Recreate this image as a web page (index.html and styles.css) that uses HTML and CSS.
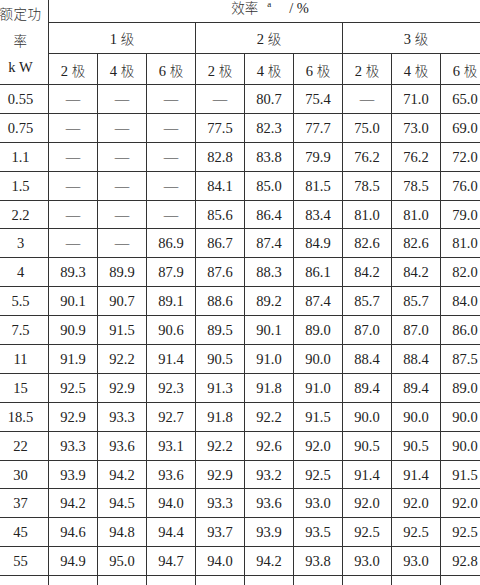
FILE: index.html
```html
<!DOCTYPE html>
<html lang="zh">
<head>
<meta charset="utf-8">
<title>效率表</title>
<link rel="stylesheet" href="styles.css">
</head>
<body>
<div class="page">
<table class="eff">
<colgroup>
<col class="c-power">
<col class="c-val"><col class="c-val"><col class="c-val">
<col class="c-val"><col class="c-val"><col class="c-val">
<col class="c-val"><col class="c-val"><col class="c-val">
</colgroup>
<thead>
<tr class="h1">
<th rowspan="3" class="power-head"><span class="cjk">额定功<br>率</span><br><span class="kw">k W</span></th>
<th colspan="9" class="eff-head"><span class="cjk">效率</span><sup class="note">a</sup><span class="unit">/ %</span></th>
</tr>
<tr class="h2">
<th colspan="3">1 <span class="cjk">级</span></th>
<th colspan="3">2 <span class="cjk">级</span></th>
<th colspan="3">3 <span class="cjk">级</span></th>
</tr>
<tr class="h3">
<th>2 <span class="cjk">极</span></th><th>4 <span class="cjk">极</span></th><th>6 <span class="cjk">极</span></th>
<th>2 <span class="cjk">极</span></th><th>4 <span class="cjk">极</span></th><th>6 <span class="cjk">极</span></th>
<th>2 <span class="cjk">极</span></th><th>4 <span class="cjk">极</span></th><th>6 <span class="cjk">极</span></th>
</tr>
</thead>
<tbody>
<tr><td>0.55</td><td>—</td><td>—</td><td>—</td><td>—</td><td>80.7</td><td>75.4</td><td>—</td><td>71.0</td><td>65.0</td></tr>
<tr><td>0.75</td><td>—</td><td>—</td><td>—</td><td>77.5</td><td>82.3</td><td>77.7</td><td>75.0</td><td>73.0</td><td>69.0</td></tr>
<tr><td>1.1</td><td>—</td><td>—</td><td>—</td><td>82.8</td><td>83.8</td><td>79.9</td><td>76.2</td><td>76.2</td><td>72.0</td></tr>
<tr><td>1.5</td><td>—</td><td>—</td><td>—</td><td>84.1</td><td>85.0</td><td>81.5</td><td>78.5</td><td>78.5</td><td>76.0</td></tr>
<tr><td>2.2</td><td>—</td><td>—</td><td>—</td><td>85.6</td><td>86.4</td><td>83.4</td><td>81.0</td><td>81.0</td><td>79.0</td></tr>
<tr><td>3</td><td>—</td><td>—</td><td>86.9</td><td>86.7</td><td>87.4</td><td>84.9</td><td>82.6</td><td>82.6</td><td>81.0</td></tr>
<tr><td>4</td><td>89.3</td><td>89.9</td><td>87.9</td><td>87.6</td><td>88.3</td><td>86.1</td><td>84.2</td><td>84.2</td><td>82.0</td></tr>
<tr><td>5.5</td><td>90.1</td><td>90.7</td><td>89.1</td><td>88.6</td><td>89.2</td><td>87.4</td><td>85.7</td><td>85.7</td><td>84.0</td></tr>
<tr><td>7.5</td><td>90.9</td><td>91.5</td><td>90.6</td><td>89.5</td><td>90.1</td><td>89.0</td><td>87.0</td><td>87.0</td><td>86.0</td></tr>
<tr><td>11</td><td>91.9</td><td>92.2</td><td>91.4</td><td>90.5</td><td>91.0</td><td>90.0</td><td>88.4</td><td>88.4</td><td>87.5</td></tr>
<tr><td>15</td><td>92.5</td><td>92.9</td><td>92.3</td><td>91.3</td><td>91.8</td><td>91.0</td><td>89.4</td><td>89.4</td><td>89.0</td></tr>
<tr><td>18.5</td><td>92.9</td><td>93.3</td><td>92.7</td><td>91.8</td><td>92.2</td><td>91.5</td><td>90.0</td><td>90.0</td><td>90.0</td></tr>
<tr><td>22</td><td>93.3</td><td>93.6</td><td>93.1</td><td>92.2</td><td>92.6</td><td>92.0</td><td>90.5</td><td>90.5</td><td>90.0</td></tr>
<tr><td>30</td><td>93.9</td><td>94.2</td><td>93.6</td><td>92.9</td><td>93.2</td><td>92.5</td><td>91.4</td><td>91.4</td><td>91.5</td></tr>
<tr><td>37</td><td>94.2</td><td>94.5</td><td>94.0</td><td>93.3</td><td>93.6</td><td>93.0</td><td>92.0</td><td>92.0</td><td>92.0</td></tr>
<tr><td>45</td><td>94.6</td><td>94.8</td><td>94.4</td><td>93.7</td><td>93.9</td><td>93.5</td><td>92.5</td><td>92.5</td><td>92.5</td></tr>
<tr><td>55</td><td>94.9</td><td>95.0</td><td>94.7</td><td>94.0</td><td>94.2</td><td>93.8</td><td>93.0</td><td>93.0</td><td>92.8</td></tr>
<tr><td>75</td><td>95.2</td><td>95.4</td><td>95.0</td><td>94.6</td><td>94.7</td><td>94.2</td><td>93.6</td><td>93.6</td><td>93.5</td></tr>
</tbody>
</table>
</div>
</body>
</html>
```

FILE: styles.css
```css
html, body {
  margin: 0;
  padding: 0;
  background: #fff;
  overflow: hidden;
}

.page {
  width: 480px;
  height: 585px;
  overflow: hidden;
}

.eff {
  border-collapse: collapse;
  table-layout: fixed;
  width: 497px;
  margin: -8px 0 0 -8px;
  font-family: "Liberation Serif", "Noto Sans CJK SC", serif;
  font-size: 14.5px;
  color: #222;
}

.c-power { width: 56px; }
.c-val { width: 49px; }

.eff th,
.eff td {
  border: 1px solid #333;
  padding: 0;
  text-align: center;
  vertical-align: middle;
  font-weight: normal;
  white-space: nowrap;
  line-height: 16px;
}

.cjk {
  font-family: "Noto Sans CJK SC", sans-serif;
  font-size: 13.5px;
  font-weight: 300;
  color: #333;
}

.eff .power-head {
  line-height: 26px;
  padding-top: 3px;
}

.power-head .cjk {
  letter-spacing: 0.5px;
}

.kw {
  font-size: 14.5px;
}

.eff-head {
  text-indent: 2px;
}

.note {
  font-size: 9px;
  vertical-align: 6px;
  margin-left: 9px;
  line-height: 0;
}

.unit {
  margin-left: 18px;
}

.h1 { height: 30px; }
.h2 { height: 31px; }
.h3 { height: 31px; }
.h3 th { padding-top: 3px; }

.eff tbody tr { height: 28.9px; }
```
